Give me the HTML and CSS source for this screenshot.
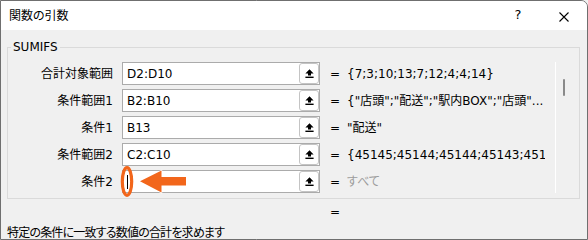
FILE: index.html
```html
<!DOCTYPE html>
<html lang="ja">
<head>
<meta charset="utf-8">
<title>関数の引数</title>
<link rel="stylesheet" href="styles.css">
</head>
<body>
<div class="window">
  <div class="titlebar">
    <span class="title">関数の引数</span>
    <span class="tb-btn help">?</span>
    <span class="tb-btn close"><svg width="10" height="10" viewBox="0 0 10 10"><path d="M0.5 0.5 L9.5 9.5 M9.5 0.5 L0.5 9.5" stroke="#000" stroke-width="1.1" fill="none"/></svg></span>
  </div>
  <div class="content">
    <fieldset class="group">
      <legend class="legend">SUMIFS</legend>
      <div class="group-inner">
        <div class="args">
          <span class="arg-label">合計対象範囲</span>
          <div class="ref-box"><span class="ref-text">D2:D10</span><span class="ref-btn"><svg width="9" height="9" viewBox="0 0 9 9"><path d="M4.5 0.3 L8.6 4.4 H6 V6.6 H3 V4.4 H0.4 Z"/><rect x="0.4" y="7.6" width="8.2" height="1.4"/></svg></span></div>
          <span class="eq">=</span>
          <span class="val">{7;3;10;13;7;12;4;4;14}</span>

          <span class="arg-label">条件範囲1</span>
          <div class="ref-box"><span class="ref-text">B2:B10</span><span class="ref-btn"><svg width="9" height="9" viewBox="0 0 9 9"><path d="M4.5 0.3 L8.6 4.4 H6 V6.6 H3 V4.4 H0.4 Z"/><rect x="0.4" y="7.6" width="8.2" height="1.4"/></svg></span></div>
          <span class="eq">=</span>
          <span class="val">{"店頭";"配送";"駅内BOX";"店頭"...</span>

          <span class="arg-label">条件1</span>
          <div class="ref-box"><span class="ref-text">B13</span><span class="ref-btn"><svg width="9" height="9" viewBox="0 0 9 9"><path d="M4.5 0.3 L8.6 4.4 H6 V6.6 H3 V4.4 H0.4 Z"/><rect x="0.4" y="7.6" width="8.2" height="1.4"/></svg></span></div>
          <span class="eq">=</span>
          <span class="val">"配送"</span>

          <span class="arg-label">条件範囲2</span>
          <div class="ref-box"><span class="ref-text">C2:C10</span><span class="ref-btn"><svg width="9" height="9" viewBox="0 0 9 9"><path d="M4.5 0.3 L8.6 4.4 H6 V6.6 H3 V4.4 H0.4 Z"/><rect x="0.4" y="7.6" width="8.2" height="1.4"/></svg></span></div>
          <span class="eq">=</span>
          <span class="val">{45145;45144;45144;45143;45148;45146;45145;45144;45143}</span>

          <span class="arg-label">条件2</span>
          <div class="ref-box active"><span class="ref-text"><span class="caret"></span></span><span class="ref-btn"><svg width="9" height="9" viewBox="0 0 9 9"><path d="M4.5 0.3 L8.6 4.4 H6 V6.6 H3 V4.4 H0.4 Z"/><rect x="0.4" y="7.6" width="8.2" height="1.4"/></svg></span>
            <svg class="callout" width="76" height="38" viewBox="0 0 76 38">
              <ellipse cx="9" cy="18.5" rx="4.7" ry="13.8" fill="none" stroke="#f2661b" stroke-width="3.2"/>
              <polygon points="22,18.3 43.5,7.6 43.5,14 68,14 68,22.4 43.5,22.4 43.5,29.6" fill="#f2661b" stroke="#ffffff" stroke-width="1.4" stroke-linejoin="miter" paint-order="stroke"/>
            </svg>
          </div>
          <span class="eq">=</span>
          <span class="val muted">すべて</span>
        </div>
        <div class="scrollbar"><div class="thumb"></div></div>
      </div>
    </fieldset>
    <div class="result"><span class="eq">=</span></div>
    <div class="desc">特定の条件に一致する数値の合計を求めます</div>
  </div>
</div>
</body>
</html>
```
FILE: styles.css
```css
* { box-sizing: border-box; }
html, body { margin: 0; padding: 0; }
body {
  width: 588px;
  height: 240px;
  overflow: hidden;
  background: #f0f0f0;
  font-family: "DejaVu Sans", "Noto Sans CJK JP", sans-serif;
  font-size: 12px;
  line-height: 16px;
  color: #000;
  font-feature-settings: "palt";
}
.window {
  width: 588px;
  height: 240px;
  border: 1px solid #6f6f6f;
  border-top-right-radius: 7px;
  background: #f0f0f0;
  display: flex;
  flex-direction: column;
  overflow: hidden;
}
.titlebar {
  height: 29px;
  flex: none;
  background: #ffffff;
  display: flex;
  align-items: center;
}
.title {
  flex: 1;
  padding-left: 8px;
}
.tb-btn {
  width: 46px;
  height: 29px;
  display: flex;
  align-items: center;
  justify-content: center;
}
.help { font-size: 13px; padding-bottom: 1px; }
.close { padding-top: 3px; }
.content {
  flex: 1;
  display: flex;
  flex-direction: column;
}
.group {
  margin: 9px 7px 0 6px;
  padding: 0 0 5px 0;
  border: 1px solid #dadada;
  min-inline-size: 0;
}
.legend {
  margin-left: 3px;
  padding: 0 2px;
  line-height: 16px;
}
.group-inner {
  display: flex;
  align-items: flex-start;
  padding-top: 7px;
}
.args {
  display: grid;
  grid-template-columns: 114px 198px 27px 198px;
  grid-auto-rows: 23px;
  row-gap: 4px;
  align-items: center;
}
.arg-label {
  text-align: right;
  padding-right: 9px;
  white-space: nowrap;
}
.ref-box {
  position: relative;
  height: 23px;
  background: #ffffff;
  border: 1px solid #ababab;
  display: flex;
  align-items: center;
}
.ref-text {
  flex: 1;
  padding-left: 4px;
  white-space: nowrap;
  display: flex;
  align-items: center;
}
.caret {
  display: block;
  width: 1px;
  height: 14px;
  background: #000;
}
.ref-btn {
  width: 20px;
  height: 21px;
  background: #ffffff;
  border: 1px solid #c4c4c4;
  border-radius: 3px;
  display: flex;
  align-items: center;
  justify-content: center;
}
.ref-btn svg { fill: #000; }
.callout {
  position: absolute;
  left: -5px;
  top: -8px;
  overflow: visible;
}
.eq {
  padding-left: 10px;
}
.val {
  white-space: nowrap;
  overflow: hidden;
}
.muted { color: #9c9c9c; }
.scrollbar {
  margin-left: 10px;
  width: 17px;
  height: 131px;
  border-left: 1px solid #ffffff;
  padding-top: 17px;
  display: flex;
  justify-content: center;
}
.thumb {
  width: 2px;
  height: 17px;
  background: #8a8a8a;
  border-radius: 1px;
}
.result {
  margin-top: 5px;
  padding-left: 319px;
  height: 16px;
}
.desc {
  margin-top: 5px;
  padding-left: 6px;
  white-space: nowrap;
  letter-spacing: -0.8px;
}
```
